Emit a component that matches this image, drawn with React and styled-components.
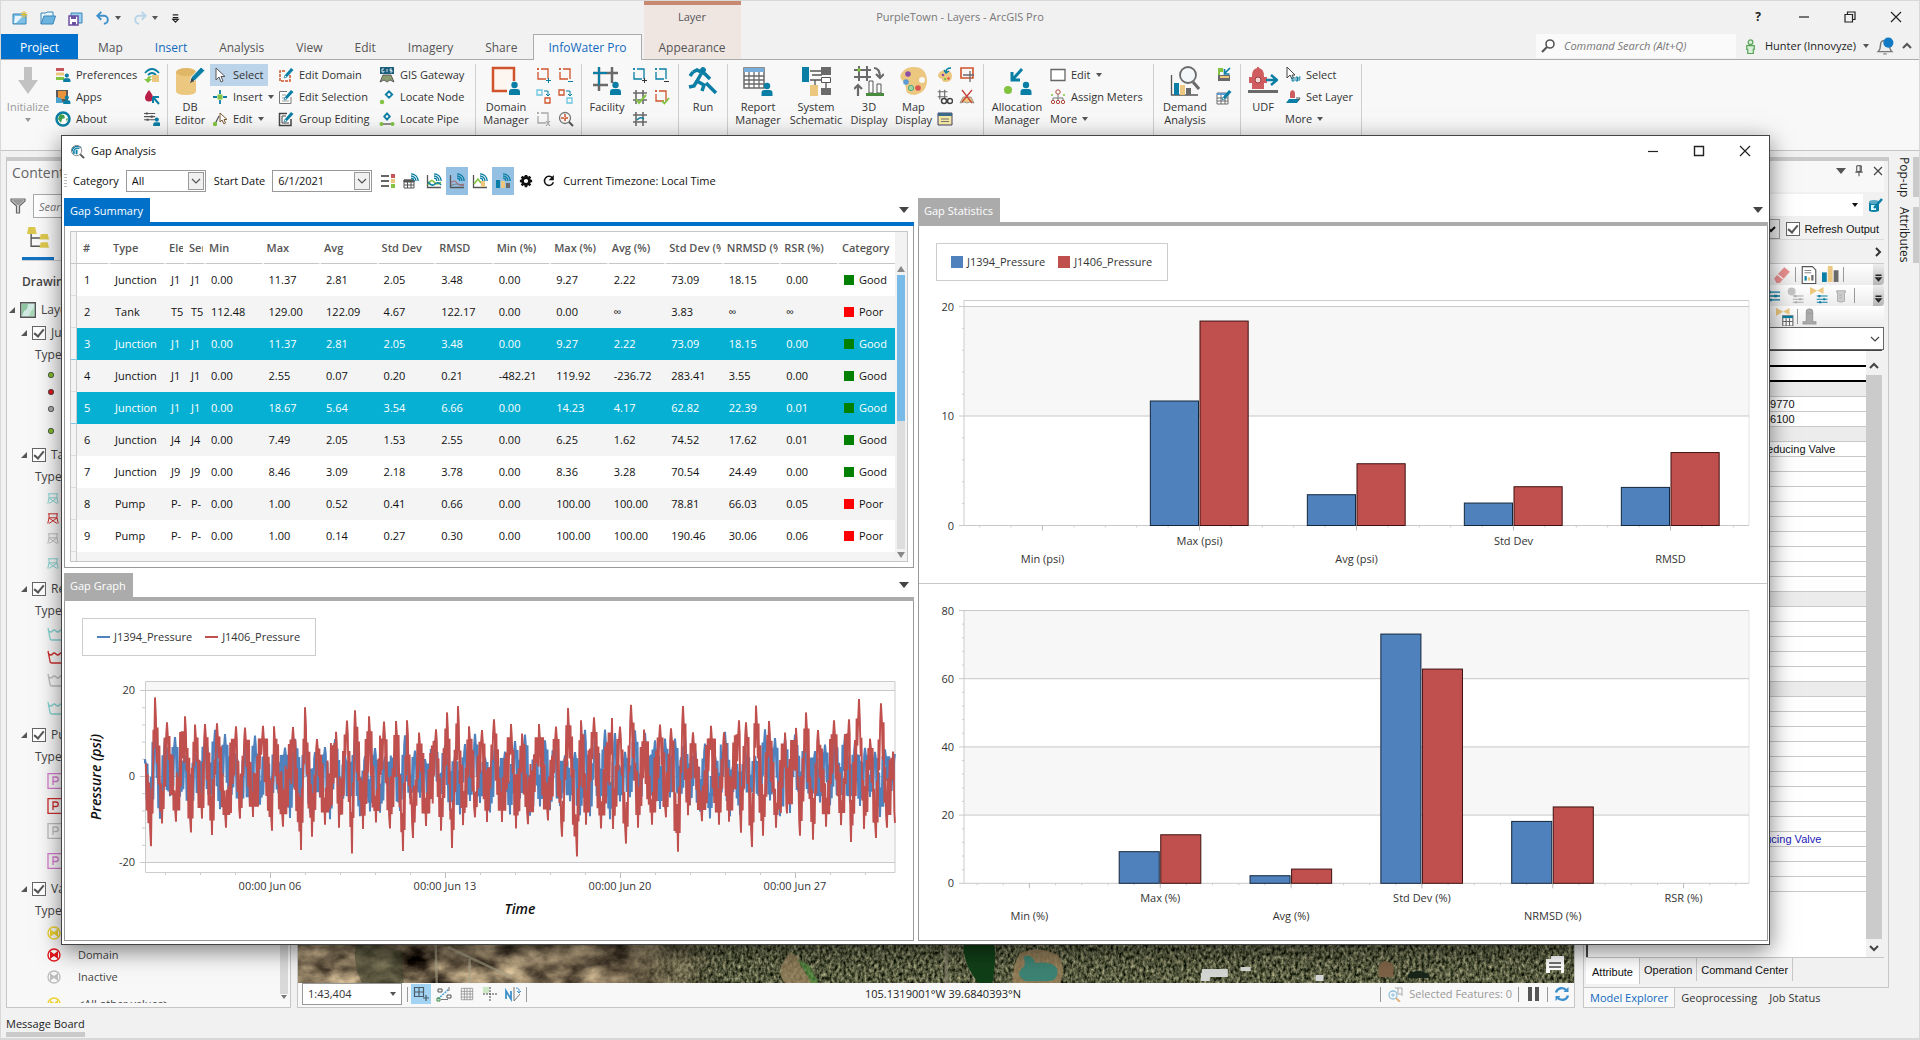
import { useState } from "react";
import styled, { createGlobalStyle, css } from "styled-components";

const BLUE = "#4f81bd";
const RED = "#c0504d";
const TEAL = "#0a7ea4";
const GOLD = "#ecc77f";
const GREY = "#6a6a6a";
const GREEN = "#82c341";
const ORANGE = "#d0532b";

const GlobalStyle = createGlobalStyle`
  * { box-sizing: border-box; }
  body {
    margin: 0;
    background: #f1f1f1;
    color: #222;
    font: 11px/14px "Open Sans", "Noto Sans", sans-serif;
  }
  button, input, select { font: inherit; color: inherit; margin: 0; }
  button { border: 0; padding: 0; background: none; }
  svg { display: block; flex: none; }
`;

/* ---------- icons ---------- */

const person = (x, y) => (
  <g fill={TEAL}>
    <circle cx={x} cy={y - 4} r="3.2" />
    <path d={`M${x - 5.5} ${y + 6}V${y + 3}q0-3 3-3h5q3 0 3 3v3z`} />
  </g>
);
const waves = (
  <g fill="none" stroke={TEAL} strokeWidth="1.3">
    <path d="M8 .8a7.200 7.200 0 0 1 7.200 7.200M8 3a5 5 0 0 1 5 5M8 5.200a2.800 2.800 0 0 1 2.800 2.800" />
  </g>
);
const axes = <path d="M1.500 2v12.500H15" fill="none" stroke="#555" strokeWidth="1.300" />;
const sliders = (c) => (
  <g stroke={c} strokeWidth="1.500" fill={c}>
    <path d="M0 3.500h16M0 8h16M0 12.500h16" />
    <path d="M4 2v3M11 6.500v3M5 11v3" strokeWidth="3" />
  </g>
);
const pencil = (
  <g>
    <path d="M6 11l1-3 6-7 2.500 2-6.500 7z" fill={TEAL} />
    <path d="M6 11l1-3 2 2z" fill="#fff" stroke={TEAL} strokeWidth=".6" />
  </g>
);
const hashLines = (c) => <path d="M4 1v14M11 1v14M1 4h14M1 11h14" fill="none" stroke={c} strokeWidth="1.600" />;
const dashBox = (c) => (
  <g fill="none" stroke={c} strokeWidth="1.300">
    <path d="M5 2h7v10M2 5v7h8" />
    <path d="M1 2h2M2 1v2" />
  </g>
);

const ICONS = {
  project: <g><path d="M1 4h13v10H1z" fill="#7cc0e8" stroke="#3a86b7" /><path d="M3 6h8L4 13H2z" fill="#eaf5fb" /><path d="M12 1v7M8.500 4.500h7M9.500 2l5 5M14.500 2l-5 5" stroke="#e0bb34" /></g>,
  open: <g><path d="M1 14V3h5l1-1h6v4" fill="#e8f4fb" stroke="#3a86b7" /><path d="M1 14L4 6h11.500L13 14z" fill="#6bb4df" stroke="#3a86b7" /></g>,
  save: <g><path d="M3 3h11v10H3z" fill="#9bd0ee" stroke="#3a86b7" /><path d="M1 6h9v9H1z" fill="#fff" stroke="#6b4fa0" strokeWidth="1.500" /><path d="M3 6h5v3H3zM4 12h4v3H4z" fill="#6b4fa0" /></g>,
  undo: <path d="M6 1L1.500 5.500 6 10M2 5.500h7a4.500 4.500 0 0 1 0 9" fill="none" stroke="#3f91cb" strokeWidth="2.200" />,
  redo: <path d="M10 1l4.500 4.500L10 10M14 5.500H7a4.500 4.500 0 0 0 0 9" fill="none" stroke="#b9d5e8" strokeWidth="2.200" />,
  initialize: <path d="M6 0h8v13h6L10 27 0 13h6z" transform="translate(5 1)" fill="#c2c2c2" />,
  prefs: <g><path d="M1 1h8v3H1z" fill="#c6545b" /><path d="M1 5.500h8v3H1z" fill={GOLD} /><path d="M1 10h8v3H1z" fill={GREEN} /><g transform="translate(4 6) scale(.65)">{person(12, 8)}</g></g>,
  apps: <g><path d="M1 1h12v12H1z" fill="#5b5b5b" /><path d="M3 2h8v8H3z" fill="#e9943a" /><path d="M1 8l5 1 2 5H1z" fill="#4aa3cf" /><g transform="translate(4 6) scale(.65)">{person(12, 8)}</g></g>,
  about: <g><circle cx="8" cy="8" r="6.500" fill="#fff" stroke={TEAL} strokeWidth="2.500" /><path d="M5 3l4 1 1 3-3 1-1 4-3-4zM11 8l2-1-1 4z" fill="#3f9d4b" /></g>,
  syncDb: <g><path d="M1 6q7-8 14 0M4 8q4-4 8 0" fill="none" stroke={TEAL} strokeWidth="1.800" /><path d="M8 8h7v7H8z" fill={GOLD} /><path d="M8 9q-5 0-5 3H0l4 4 4-4H5.500" fill={GREEN} /></g>,
  drop: <g><path d="M5 1q4 5 4 7.500a4 4 0 0 1-8 0Q1 6 5 1z" fill="#b71f48" /><path d="M9 8h6M9 8v6M9 8l6 7" stroke={TEAL} strokeWidth="2" /></g>,
  options: <g><g transform="scale(.7)">{sliders("#555")}</g><g transform="translate(5 6) scale(.65)">{person(12, 8)}</g></g>,
  dbEdit: <g><path d="M1 6v19q0 4 10 4t10-4V6z" fill={GOLD} /><ellipse cx="11" cy="6" rx="10" ry="4" fill="#e0b766" /><path d="M15 16l1.500-5L26 1l4 3.500-10 10z" fill={TEAL} stroke="#f8f8f8" /><path d="M15 17l1.500-5 3 3z" fill="#444" /></g>,
  cursor: <path d="M4 1v12l3-3 2 5 2-1-2-4.500h4z" fill="#fff" stroke="#555" />,
  insert: <g><path d="M8 1v4M8 11v4M1 8h4M11 8h4" stroke={TEAL} strokeWidth="1.800" /><path d="M5.500 5.500h5v5h-5z" fill={GREEN} /></g>,
  editLine: <g><path d="M3 13L7 5" stroke="#555" strokeWidth="1.300" /><circle cx="3" cy="13" r="2.200" fill={GREEN} /><path d="M8 2v9l2-2 2 4 1.500-1-1.500-3.500h3z" fill="#fff" stroke="#7a5a35" /></g>,
  editDomain: <g><path d="M12 8v6H2V4h6" fill="none" stroke={ORANGE} strokeWidth="1.500" strokeDasharray="3 1" />{pencil}</g>,
  editSel: <g><path d="M13 8v6.500H1.500v-12H9" fill="#fff" stroke="#777" /><path d="M4 6h4M4 9h3M4 12h7" stroke="#999" />{pencil}</g>,
  groupEdit: <g><path d="M13 8v6.500H1.500v-12H9" fill="#fff" stroke="#444" strokeWidth="1.500" /><path d="M4 5h4M4 5v7h7" stroke="#444" fill="none" />{pencil}</g>,
  gis: <g><path d="M1 0h14v7H1z" fill="#1b5f7d" /><path d="M5 2H3v3h2V4M8 2v3M13 2h-2v1.500h2V5h-2" stroke="#fff" fill="none" strokeWidth=".8" /><path d="M1 15l3-7h8l3 7-4-2-3 2-3-2z" fill="#8b9c72" stroke="#444" strokeWidth=".8" /></g>,
  locNode: <g><circle cx="3" cy="13" r="2.200" fill={GREEN} /><path d="M10 1l4.500 4.500L10 10 5.500 5.500z" fill={TEAL} /><circle cx="10" cy="5.500" r="1.500" fill="#fff" /></g>,
  locPipe: <g><path d="M3 13h10" stroke="#555" strokeWidth="1.300" /><circle cx="2.500" cy="13" r="2" fill={GREEN} /><circle cx="13.500" cy="13" r="2" fill={GREEN} /><path d="M8 1l4 4.500L8 10 4 5.500z" fill={TEAL} /><circle cx="8" cy="5.500" r="1.300" fill="#fff" /></g>,
  domain: <g><path d="M2 2h21v23H2z" fill="#fdf5f0" stroke={ORANGE} strokeWidth="2.500" /><path d="M16 15h14v15H16z" fill="#f8f8f8" />{person(23.500, 23)}</g>,
  domAdd: <g>{dashBox(ORANGE)}<path d="M10 13.500h5M12.500 11v5" stroke={TEAL} /></g>,
  domDel: <g>{dashBox(ORANGE)}<path d="M10 14.500h5" stroke={TEAL} /></g>,
  domSwap: <g fill="none"><path d="M1 1h5v5H1z" stroke="#6ac6dd" strokeWidth="1.300" /><path d="M9 9h5v5H9z" stroke={ORANGE} strokeWidth="1.300" /><path d="M8 2h4v4M10 5l2 2 2-2" stroke={TEAL} /></g>,
  domSwap2: <g fill="none"><path d="M1 1h5v5H1z" stroke={ORANGE} strokeWidth="1.300" /><path d="M9 9h5v5H9z" stroke="#6ac6dd" strokeWidth="1.300" /><path d="M8 2h4v4M10 5l2 2 2-2" stroke={TEAL} /></g>,
  domClear: <g>{dashBox("#aaa")}<path d="M10 10l4 5M14 10l-4 5" stroke="#999" /></g>,
  domZoom: <g fill="none"><circle cx="7" cy="7" r="5.500" stroke="#777" strokeWidth="1.300" /><path d="M11 11l4 4" stroke="#555" strokeWidth="2" /><path d="M7 3v8M3 7h8" stroke={ORANGE} strokeWidth="1.500" strokeDasharray="3 1" /></g>,
  facility: <g><path d="M7 1v24M20 1v16M1 7h25M1 19h15" stroke={GREY} strokeWidth="2.500" fill="none" /><path d="M7 1v18M1 7h14" stroke={TEAL} strokeWidth="2" />{person(23.500, 23)}</g>,
  facAdd: <g>{dashBox(TEAL)}<path d="M10 13.500h5M12.500 11v5" stroke="#333" /></g>,
  facDel: <g>{dashBox(TEAL)}<path d="M10 14.500h5" stroke="#333" /></g>,
  facCheck: <g>{hashLines(GREY)}<path d="M4 10l3 4 7-8" fill="none" stroke={GREEN} strokeWidth="2" /></g>,
  facBox: <g>{dashBox(ORANGE)}<path d="M8 12l2.500 2.500L15 9" fill="none" stroke={GREEN} strokeWidth="1.800" /></g>,
  facHash: <g>{hashLines(GREY)}<path d="M5 9q3-4 7-1" stroke={TEAL} fill="none" strokeWidth="1.500" /></g>,
  run: <g fill="none" stroke={TEAL} strokeWidth="3.500"><circle cx="15" cy="4" r="2.500" fill={TEAL} strokeWidth="1" /><path d="M5 6l4-2 8 4 5 5M13 8l-4 7 7 4-2 6M9 15l-3 5-5 1M18 17l10 10M2 10l3-4" /></g>,
  report: <g><path d="M1 2h20v20H1z" fill="#fff" stroke={GREY} strokeWidth="1.500" /><path d="M1 2h20v4H1z" fill="#78aedb" /><path d="M1 10h20M1 14h20M1 18h20M6 6v16M11 6v16M16 6v16" stroke={GREY} strokeWidth="1.300" />{person(24, 24)}</g>,
  schematic: <g><path d="M9 5h12M9 14h12M11 9h10M14 14v6M25 12v12" stroke="#555" strokeWidth="1.300" /><path d="M1 1h7v15H1z" fill={TEAL} /><path d="M20 1h10v8H20z" fill={GREY} /><path d="M20.500 11.500h9v5h-9z" fill="#fff" stroke="#555" /><path d="M9 19h8v11H9z" fill={GOLD} /><path d="M20 22h10v7H20z" fill={GREY} /></g>,
  display3d: <g><path d="M5 0v15M13 0v15M0 4h17M0 11h17" stroke={GREY} strokeWidth="2" /><circle cx="5" cy="4" r="1.800" fill={GREEN} /><path d="M20 2q6 0 6 10M22 8l4 4 4-4M4 30V19M0 23l4-4 4 4" fill="none" stroke={GREY} strokeWidth="2.200" /><path d="M15 15h4v12h-4zM23 18h4v9h-4z" fill="#fff" stroke="#555" /><path d="M12 27h18v3H12z" fill="#4a8c3f" /></g>,
  palette: <g><path d="M13 1q14-1 15 13 0 12-12 15-10 0-9-7 0-4-3-7-4-3-2-7 3-6 11-7z" fill={GOLD} /><circle cx="9" cy="8" r="2.800" fill="#8a4fa8" /><circle cx="7" cy="16" r="2.800" fill="#5b9bd5" /><circle cx="12" cy="22" r="2.600" fill="#a8d5a0" stroke="#4a8" /><circle cx="19" cy="22" r="2.800" fill="#d9534f" /><circle cx="23" cy="14" r="3" fill="#f8f8f8" /></g>,
  paletteS: <g><path d="M8 3q7 0 7 6t-7 6q-3 0-3-3-4-1-4-4 1-4 7-5z" fill={GOLD} /><circle cx="6" cy="8" r="1.300" fill="#8a4fa8" /><circle cx="8" cy="12" r="1.200" fill={GREEN} /><circle cx="11.500" cy="11.500" r="1.300" fill="#d9534f" /><path d="M14 1Q9 1 9 5M7 3l2 3 3-2" fill="none" stroke={TEAL} strokeWidth="1.400" /></g>,
  frameS: <g fill="none"><path d="M2 1h12v10H2z" stroke={ORANGE} strokeWidth="1.600" /><path d="M11 4v11M4 8h11" stroke={GREY} strokeWidth="1.300" /></g>,
  hashFind: <g><g transform="scale(.7)">{hashLines(GREY)}</g><circle cx="7" cy="12" r="2.500" fill="#fff" stroke="#444" strokeWidth="1.500" /><circle cx="13" cy="12" r="2.500" fill="#fff" stroke="#444" strokeWidth="1.500" /></g>,
  noMap: <g><path d="M1 14l3-6h8l3 6-4-1-3 1-3-1z" fill={GOLD} stroke="#777" strokeWidth=".7" /><path d="M3 1l10 13M13 1L3 13" stroke="#c8403a" strokeWidth="1.300" /></g>,
  notes: <g><path d="M1 2h14v12H1z" fill="#f7e9a4" stroke="#446" /><path d="M1 2h14v3H1z" fill="#3c6c8c" /><path d="M4 8h8M4 10.500h8" stroke="#777" /></g>,
  alloc: <g><circle cx="6" cy="24" r="4" fill={GREEN} /><path d="M20 3L11 13M10 6v8h8" fill="none" stroke={TEAL} strokeWidth="3" />{person(24, 23)}</g>,
  rect: <path d="M1 2.500h14v11H1z" fill="#fff" stroke="#666" strokeWidth="1.300" />,
  meters: <g fill="none" stroke="#b0483a"><circle cx="8" cy="3" r="2.200" /><path d="M8 5v4M3 12V9h10v3M8 9v3" stroke="#777" /><circle cx="3" cy="13" r="1.700" /><circle cx="8" cy="13" r="1.700" /><circle cx="13" cy="13" r="1.700" /><circle cx="2" cy="6" r="1" fill={GREEN} stroke="none" /><circle cx="14" cy="6" r="1" fill={GREEN} stroke="none" /></g>,
  demand: <g><path d="M1.500 9v20H28" stroke="#555" fill="none" strokeWidth="1.300" /><path d="M4 17h5v12H4z" fill={TEAL} /><path d="M10 19h5v10h-5z" fill={GOLD} /><path d="M16 22h5v7h-5z" fill={GREY} /><path d="M23 16l6 7" stroke={GREY} strokeWidth="3" /><circle cx="18" cy="9" r="8" fill="#f3f7fa" stroke={GREY} strokeWidth="1.800" /></g>,
  demIn: <g><path d="M2 1h5v4H4v4H2z" fill={GREEN} /><path d="M2 8h12v6H2z" fill={GREY} /><path d="M4 10h9" stroke={GOLD} strokeWidth="2" /><path d="M14 1L9 6M8.500 2v5h5" stroke={TEAL} strokeWidth="1.700" fill="none" /></g>,
  demEdit: <g><path d="M1 4h11v11H1z" fill="#fff" stroke={GREY} /><path d="M1 4h11v2H1z" fill="#5b9bd5" /><path d="M1 9h11M1 12h11M5 6v9M9 6v9" stroke={GREY} />{pencil}</g>,
  udf: <g><path d="M4 23V10q0-7 5-8V1h2v1q5 1 5 8v13zM1 11h18v6H1z" fill="#cf5c5e" /><circle cx="10" cy="14" r="3" fill="#f4d6d6" stroke="#9c3c3e" /><path d="M0 24h30v3H0z" fill={GREY} /><path d="M18 14h9M23 9l6 5-6 5" stroke={TEAL} strokeWidth="2.500" fill="none" /></g>,
  udfSel: <g><path d="M2 0v11l3-3 2 4 1.500-1L7 8h3z" fill="#fff" stroke="#444" /><path d="M7 10v4h2v-4M11 10v4h1.500v-4zM15.500 10H14v4M14 12h1.500" stroke={TEAL} fill="none" /></g>,
  udfLayer: <g><path d="M5 9V4q0-2 2.500-3Q10 2 10 4v5z" fill="#cf5c5e" /><path d="M1 14l3-4h11l-3 4z" fill={TEAL} /><path d="M11 9h4l-2 3" fill="none" stroke="#555" /></g>,
  searchS: <g fill="none" stroke="#555" strokeWidth="1.600"><circle cx="10" cy="6" r="4" /><path d="M7 9l-5 5" strokeWidth="2.200" /></g>,
  user: <g fill="#d9efd9" stroke="#5aa55a" strokeWidth="1.300"><circle cx="8" cy="3.500" r="2.500" /><path d="M4 7h8v4h-1v4.500H5V11H4z" /></g>,
  bell: <g><path d="M2 13q2-2 2-6 0-4 4-4t4 4q0 4 2 6z" fill="#eee" stroke="#777" strokeWidth="1.300" /><path d="M6.500 15h3" stroke="#777" /><circle cx="11" cy="5" r="4.500" fill="#1279c4" /></g>,
  filter: <g><path d="M1 1h14v2L9.500 8v7h-3V8L1 3z" fill="#ddd" stroke="#666" strokeWidth="1.200" /><path d="M2 2h12L9 7H7z" fill="#999" /></g>,
  gap: <g><path d="M2 8a6 6 0 0 1 10-4M4 9a4 4 0 0 1 6-4" fill="none" stroke={TEAL} strokeWidth="1.400" /><circle cx="7" cy="7" r="5.500" fill="none" stroke="#888" /><path d="M3 10V8h2v3zM6 11V6h2v5z" fill={TEAL} /><path d="M11 11l4 4" stroke="#555" strokeWidth="2" /></g>,
  tList: <g><path d="M1 3h8M1 8h8M1 13h8" stroke="#666" strokeWidth="1.800" /><path d="M11 1h4v4h-4z" fill="#c6545b" /><path d="M11 6h4v4h-4z" fill={GOLD} /><path d="M11 11h4v4h-4z" fill={GREEN} /></g>,
  tTable: <g><path d="M1 7h10v8H1z" fill="#fff" stroke="#555" /><path d="M1 7h10v2H1zM1 12h10M4.500 9v6M8 9v6" fill="#555" stroke="#555" />{waves}</g>,
  tGraph: <g>{axes}<path d="M2 12q3-7 6-3t7 0" fill="none" stroke={GREEN} strokeWidth="1.600" /><path d="M2 9q4 5 7 2t6 1" fill="none" stroke={TEAL} strokeWidth="1.500" />{waves}</g>,
  tGraph2: <g>{axes}<path d="M2 10q3-4 6 0t7 1" fill="none" stroke="#b06a80" strokeWidth="1.200" /><path d="M2 12.500q5-3 13 0" fill="none" stroke="#777" strokeWidth="1.200" />{waves}</g>,
  tGraph3: <g>{axes}<path d="M2 11l4-5 3 4" fill="none" stroke={GREEN} strokeWidth="1.600" /><path d="M9 8h4v6H9z" fill={GOLD} />{waves}</g>,
  tBars: <g><path d="M1 7h4v8H1z" fill={TEAL} /><path d="M6 8h4v7H6z" fill={GOLD} /><path d="M11 10h4v5h-4z" fill={GREY} />{waves}</g>,
  gear: <g><circle cx="8" cy="8" r="4" fill="none" stroke="#111" strokeWidth="3.200" /><path d="M8 1v2.500M8 12.500V15M1 8h2.500M12.500 8H15M3 3l2 2M11 11l2 2M13 3l-2 2M5 11l-2 2" stroke="#111" strokeWidth="3" /></g>,
  reload: <g><path d="M13 9.500A5.200 5.200 0 1 1 12 4.500" fill="none" stroke="#111" strokeWidth="1.700" /><path d="M13.500 1v6h-6z" fill="#111" /></g>,
  snap: <g fill="none" stroke="#4a5c68" strokeWidth="1.200"><path d="M1.500 1.500h9v9h-9zM6 1.500v9M1.500 6h9M13 9v6M10 12h6" /></g>,
  snap2: <g fill="none"><path d="M2 3h4v3H2zM11 9h4v3h-4z" stroke="#555" /><path d="M2 13L13 3" stroke="#4a9fd5" strokeWidth="1.500" strokeDasharray="2 1" /><path d="M1 12h3v3H1z" stroke="#3a8a3a" /><path d="M5 13.500h7M13 1v4" stroke="#777" /></g>,
  grid: <path d="M1.500 1.500h13v13h-13zM5 1v14M8 1v14M11.500 1v14M1 5h14M1 8h14M1 11.500h14" fill="none" stroke="#999" />,
  cross: <g><path d="M1 1h6v6H1z" fill="#cde8c4" /><path d="M8 1v14M1 8h14" stroke="#444" strokeDasharray="2 1" /></g>,
  north: <g fill="none"><path d="M1 13V5l5 8V5" stroke="#3f91cb" strokeWidth="1.800" /><path d="M9 1v14l6-7" stroke="#777" /><path d="M11 2q4 0 3 4M12 5l2 2 2-2" stroke="#3f91cb" /></g>,
  selZoom: <g fill="none"><path d="M8 2h7v8M11 2v6h4" stroke="#aaa" /><circle cx="6" cy="9" r="4" stroke="#8fc0dd" strokeWidth="1.300" /><path d="M6 7v4M4 9h4" stroke="#8fc0dd" /><path d="M9 12l4 4" stroke="#e0b07a" strokeWidth="1.800" /></g>,
  pause: <path d="M3 1h4v14H3zM10 1h4v14h-4z" fill="#555" />,
  refresh: <g fill="none" stroke="#3f91cb" strokeWidth="2.400"><path d="M2 6.500a6 6 0 0 1 10.500-2M14 9.500a6 6 0 0 1-10.500 2" /><path d="M14.500 1v5h-5zM1.500 15v-5h5z" fill="#3f91cb" stroke="none" /></g>,
  pin: <path d="M5 1h6v8H5zM9.500 1v8M3 9.500h10M8 10v5" fill="none" stroke="#444" strokeWidth="1.300" />,
  dbSmall: <g><path d="M1 5v9q5 2 10 0V5z" fill={TEAL} /><ellipse cx="6" cy="5" rx="5" ry="2" fill="#5aa9c4" /><path d="M3 8h5v5H3z" fill="#dff" /><path d="M6 11l8-9" stroke={TEAL} strokeWidth="2.500" /></g>,
  eraser: <g><path d="M1 11l9-10 5 4-9 10H3z" fill="#e88f8f" /><path d="M4 7.500l5 4" stroke="#fff" /></g>,
  reportS: <g><path d="M2 .5h9l3 3v12H2z" fill="#fff" stroke="#555" /><path d="M4 4h6M4 6h6" stroke="#888" /><path d="M4 9h2v4H4z" fill={TEAL} /><path d="M7 10h2v3H7z" fill={GOLD} /><path d="M10 8h2v5h-2z" fill={GREY} /></g>,
  bars: <g><path d="M0 6h4.500v9H0z" fill={TEAL} /><path d="M5.500 0H10v15H5.500z" fill={GOLD} /><path d="M11 4h4.500v11H11z" fill={GREY} /></g>,
  slidersS: sliders(TEAL),
  slidersOff: <g><circle cx="5" cy="4" r="3.500" fill="#c4c4c4" /><g transform="translate(6 6) scale(.6)">{sliders("#aaa")}</g></g>,
  valveSet: <g><path d="M0 0l12 6V0L0 7z" fill={GOLD} /><g transform="translate(6 6) scale(.6)">{sliders(TEAL)}</g></g>,
  cup: <path d="M3 2h10v2h-1v10q-4 2-8 0V4H3zM6 7h3M6 10h3" fill="#ccc" stroke="#aaa" />,
  valveTable: <g><path d="M0 0l12 6V0L0 7z" fill={GOLD} /><path d="M6 7h9v9H6z" fill="#fff" stroke={GREY} /><path d="M6 7h9v2H6z" fill={TEAL} /><path d="M9 9v7M12 9v7M6 12h9" stroke={GREY} /></g>,
  hydrantOff: <path d="M5 13V4q0-3 3-3t3 3v9h3v2H2v-2zM5 5h6" fill="#aaa" stroke="#999" />,
  chat: <g><path d="M0 3h5V0h13v17h-3v-3H4v3H0z" fill="#fff" /><path d="M3 7h12M3 11h12" stroke="#444" strokeWidth="1.500" /></g>,
  layers: <g><path d="M.7.7h14.600v14.600H.7z" fill="#cfe9e2" stroke="#555" strokeWidth="1.400" /><path d="M2 2h6l-1 5-3 2-2 5z" fill="#8fc4a0" /><path d="M11 9l3-3v8h-5z" fill="#a7d8b4" /></g>,
  tree: <g><path d="M3 4v10h8M3 8h8" fill="none" stroke="#555" /><path d="M1 0h5l1 5H0z" fill="#dcc84e" /><path d="M10 5h5l1 4H9zM10 11h5l1 4H9z" fill="#dcc84e" /></g>,
};

const Icon = ({ name, size = 16, box }) => (
  <svg width={size} height={size} viewBox={`0 0 ${box || 16} ${box || 16}`} aria-hidden="true">
    {ICONS[name]}
  </svg>
);

const Caret = styled.i`
  display: block;
  width: 0;
  height: 0;
  border: 3px solid transparent;
  border-top: 4px solid ${(p) => p.$color || "#555"};
  border-bottom: 0;
  ${(p) => p.$big && css`border-width: 6px 5px 0;`}
`;

/* ---------- title bar ---------- */

const Page = styled.div`
  position: relative;
  min-height: 100vh;
  display: flex;
  flex-direction: column;
  border: 1px solid #d8d8d8;
  border-bottom-width: 2px;
  overflow: hidden;
`;
const Header = styled.header`
  display: grid;
  grid-template-columns: 1fr auto 1fr;
  grid-template-rows: 32px 26px;
  border-bottom: 1px solid #ababab;
  height: 59px;
`;
const QuickAccess = styled.div`
  grid-area: 1 / 1;
  display: flex;
  align-items: center;
  gap: 12px;
  padding: 2px 0 0 11px;
`;
const QuickGroup = styled.div`
  display: flex;
  align-items: center;
  gap: 5px;
`;
const AppTitle = styled.h1`
  grid-area: 1 / 2;
  margin: 0;
  align-self: center;
  font-size: 11px;
  font-weight: 400;
  color: #777;
`;
const WindowButtons = styled.div`
  grid-area: 1 / 3;
  display: flex;
  justify-content: flex-end;
  align-items: center;
  button { width: 46px; height: 28px; display: grid; place-items: center; font-size: 12px; }
`;
const Tabs = styled.nav`
  grid-area: 1 / 1 / 3 / 3;
  display: flex;
  align-items: flex-end;
  pointer-events: none;
  button { pointer-events: auto; }
`;
const Tab = styled.button`
  height: 25px;
  padding: 2px 16px 0;
  font-size: 12px;
  color: ${(p) => (p.$accent ? "#1269bd" : "#555")};
  ${(p) => p.$file && css`
    width: 77px;
    margin-right: 4px;
    color: #fff;
    background: #0072ce;
  `}
  ${(p) => p.$active && css`
    height: 26px;
    padding: 1px 14px 0;
    margin: 0 2px -1px 0;
    background: #f8f8f8;
    border: 1px solid #ababab;
    border-bottom: 0;
  `}
`;
const ContextTab = styled.div`
  align-self: stretch;
  width: 97px;
  display: flex;
  flex-direction: column;
  justify-content: space-between;
  align-items: center;
  background: #efe6e2;
  border-top: 4px solid #c88971;
  color: #555;
  padding-top: 5px;
  button { height: 25px; padding-top: 2px; font-size: 12px; }
`;
const UserArea = styled.div`
  grid-area: 2 / 3;
  display: flex;
  justify-content: flex-end;
  align-items: center;
  gap: 7px;
  padding-right: 6px;
`;
const CommandSearch = styled.label`
  display: flex;
  align-items: center;
  gap: 8px;
  width: 200px;
  height: 24px;
  padding-left: 4px;
  background: #fafafa;
  input { flex: 1; min-width: 0; border: 0; padding: 0; background: none; font-style: italic; }
  input::placeholder { color: #777; }
`;

const Glyph = ({ d, size = 12, w = 1.2, color = "#222" }) => (
  <svg width={size} height={size} viewBox="0 0 12 12" fill="none" stroke={color} strokeWidth={w}>
    <path d={d} />
  </svg>
);

const MENU = ["Map", "Insert", "Analysis", "View", "Edit", "Imagery", "Share"];

function TitleBar() {
  return (
    <Header>
      <QuickAccess>
        <button aria-label="New project"><Icon name="project" /></button>
        <button aria-label="Open"><Icon name="open" /></button>
        <button aria-label="Save"><Icon name="save" /></button>
        <QuickGroup>
          <button aria-label="Undo"><Icon name="undo" size={14} /></button><Caret />
        </QuickGroup>
        <QuickGroup>
          <button aria-label="Redo"><Icon name="redo" size={14} /></button><Caret />
        </QuickGroup>
        <button aria-label="Customize"><Glyph size={11} d="M3 2h6M3 5h6M3 7h6L6 10z" /></button>
      </QuickAccess>
      <AppTitle>PurpleTown - Layers - ArcGIS Pro</AppTitle>
      <WindowButtons>
        <button aria-label="Help"><b>?</b></button>
        <button aria-label="Minimize"><Glyph d="M1 6h10" /></button>
        <button aria-label="Restore"><Glyph d="M1 3.500h7.500V11H1zM3.500 3V1H11v7.500H9" /></button>
        <button aria-label="Close"><Glyph d="M1 1l10 10M11 1L1 11" /></button>
      </WindowButtons>
      <Tabs>
        <Tab $file>Project</Tab>
        {MENU.map((m) => <Tab key={m} $accent={m === "Insert"}>{m}</Tab>)}
        <Tab $active $accent>InfoWater Pro</Tab>
        <ContextTab>
          <span>Layer</span>
          <button>Appearance</button>
        </ContextTab>
      </Tabs>
      <UserArea>
        <CommandSearch>
          <Icon name="searchS" />
          <input placeholder="Command Search (Alt+Q)" aria-label="Command Search" />
        </CommandSearch>
        <Icon name="user" size={15} />
        <span>Hunter (Innovyze)</span>
        <Caret />
        <button aria-label="Notifications"><Icon name="bell" size={18} /></button>
        <button aria-label="Collapse ribbon"><Glyph d="M2 8l4-4 4 4" w={2} color="#555" /></button>
      </UserArea>
    </Header>
  );
}

/* ---------- ribbon ---------- */

const RibbonBar = styled.div`
  display: flex;
  height: 91px;
  padding-top: 4px;
  background: #f8f8f8;
  border-bottom: 1px solid #c4c4c4;
`;
const Group = styled.div`
  display: flex;
  width: ${(p) => p.$w}px;
  padding-left: 2px;
  border-right: 1px solid #cfcfcf;
`;
const Big = styled.button`
  width: ${(p) => p.$w}px;
  display: flex;
  flex-direction: column;
  align-items: center;
  gap: 4px;
  padding-top: 2px;
  line-height: 13px;
  color: ${(p) => (p.$off ? "#999" : "#333")};
  ${Caret} { margin-top: 1px; }
`;
const Col = styled.div`
  width: ${(p) => p.$w || 22}px;
`;
const Item = styled.button`
  display: flex;
  align-items: center;
  gap: 5px;
  height: 22px;
  padding: 0 ${(p) => (p.$on ? 5 : 2)}px 0 2px;
  color: #333;
  white-space: nowrap;
  background: ${(p) => (p.$on ? "#bcd4e9" : "none")};
`;

const RIBBON = [
  { w: 167, parts: [
    { big: ["Initialize"], icon: "initialize", w: 50, off: true },
    { w: 89, items: [["prefs", "Preferences"], ["apps", "Apps"], ["about", "About"]] },
    { items: [["syncDb"], ["drop"], ["options"]] },
  ] },
  { w: 308, parts: [
    { big: ["DB", "Editor"], icon: "dbEdit", w: 40 },
    { w: 66, items: [["cursor", "Select", "on"], ["insert", "Insert", "menu"], ["editLine", "Edit", "menu"]] },
    { w: 101, items: [["editDomain", "Edit Domain"], ["editSel", "Edit Selection"], ["groupEdit", "Group Editing"]] },
    { w: 98, items: [["gis", "GIS Gateway"], ["locNode", "Locate Node"], ["locPipe", "Locate Pipe"]] },
  ] },
  { w: 106, parts: [
    { big: ["Domain", "Manager"], icon: "domain", w: 56 },
    { items: [["domAdd"], ["domSwap"], ["domClear"]] },
    { items: [["domDel"], ["domSwap2"], ["domZoom"]] },
  ] },
  { w: 97, parts: [
    { big: ["Facility"], icon: "facility", w: 46 },
    { items: [["facAdd"], ["facCheck"], ["facHash"]] },
    { items: [["facDel"], ["facBox"]] },
  ] },
  { w: 49, parts: [{ big: ["Run"], icon: "run", w: 44 }] },
  { w: 256, parts: [
    { big: ["Report", "Manager"], icon: "report", w: 56 },
    { big: ["System", "Schematic"], icon: "schematic", w: 60 },
    { big: ["3D", "Display"], icon: "display3d", w: 46 },
    { big: ["Map", "Display"], icon: "palette", w: 43 },
    { items: [["paletteS"], ["hashFind"], ["notes"]] },
    { items: [["frameS"], ["noMap"]] },
  ] },
  { w: 170, parts: [
    { big: ["Allocation", "Manager"], icon: "alloc", w: 62 },
    { w: 100, items: [["rect", "Edit", "menu"], ["meters", "Assign Meters"], [null, "More", "menu"]] },
  ] },
  { w: 87, parts: [
    { big: ["Demand", "Analysis"], icon: "demand", w: 58 },
    { items: [["demIn"], ["demEdit"]] },
  ] },
  { w: 121, parts: [
    { big: ["UDF"], icon: "udf", w: 40 },
    { w: 70, items: [["udfSel", "Select"], ["udfLayer", "Set Layer"], [null, "More", "menu"]] },
  ] },
];

function Ribbon() {
  return (
    <RibbonBar>
      {RIBBON.map((g, i) => (
        <Group key={i} $w={g.w}>
          {g.parts.map((p, j) =>
            p.big ? (
              <Big key={j} $w={p.w} $off={p.off}>
                <Icon name={p.icon} size={30} box={30} />
                <span>{p.big[0]}{p.big[1] && <><br />{p.big[1]}</>}</span>
                {p.off && <Caret $color="#999" />}
              </Big>
            ) : (
              <Col key={j} $w={p.w}>
                {p.items.map(([icon, label, mode]) => (
                  <Item key={icon || label} $on={mode === "on"} aria-label={label || icon}>
                    {icon && <Icon name={icon} />}
                    {label}
                    {mode === "menu" && <Caret />}
                  </Item>
                ))}
              </Col>
            )
          )}
        </Group>
      ))}
    </RibbonBar>
  );
}

/* ---------- contents pane ---------- */

const Workspace = styled.main`
  flex: 1;
  display: flex;
  padding: 6px 0 0 5px;
  min-height: 0;
`;
const Contents = styled.aside`
  width: 285px;
  display: flex;
  flex-direction: column;
  background: #f8f8f8;
  border: 1px solid #c6c6c6;
  border-top: 4px solid #cacaca;
  padding-bottom: 4px;
  h2 { margin: 3px 0 0 5px; font: 400 14px/18px "Open Sans", sans-serif; color: #666; }
`;
const FilterRow = styled.label`
  display: flex;
  align-items: center;
  gap: 7px;
  margin: 12px 10px 0 3px;
  input { flex: 1; height: 24px; border: 1px solid #aaa; padding: 0 5px; background: #fff; font-style: italic; }
`;
const ViewTabs = styled.div`
  display: flex;
  gap: 5px;
  margin: 9px 10px 0 15px;
  border-bottom: 1px solid #ccc;
  height: 34px;
  button { width: 32px; display: grid; place-items: start center; }
  button:first-child { border-bottom: 3px solid #1272c4; }
`;
const OrderTitle = styled.h3`
  margin: 13px 0 7px 15px;
  font-size: 12px;
  line-height: 16px;
  font-weight: 600;
  color: #444;
`;
const TreeScroll = styled.div`
  flex: 1;
  min-height: 0;
  display: flex;
  overflow: hidden;
  margin-right: 2px;
`;
const TreeList = styled.div`
  flex: 1;
  height: 0;
`;
const TreeRow = styled.div`
  display: flex;
  align-items: center;
  gap: 5px;
  height: ${(p) => p.$h || 22}px;
  padding-left: ${(p) => p.$in}px;
  color: #444;
  font-size: 12px;
`;
const Symbol = styled(TreeRow)`
  gap: 17px;
  font-size: 11px;
`;
const Expander = styled.i`
  width: 0;
  height: 0;
  border: 3px solid transparent;
  border-right-color: #555;
  border-bottom-color: #555;
`;
const Check = styled.input`
  appearance: none;
  width: 14px;
  height: 14px;
  border: 1px solid #666;
  background: #fff;
  display: grid;
  place-items: center;
  &:checked::after {
    content: "";
    width: 4px;
    height: 8px;
    margin-bottom: 2px;
    border: solid #555;
    border-width: 0 2px 2px 0;
    transform: rotate(40deg);
  }
`;
const PaneScroll = styled.div`
  width: 8px;
  background: #d9d9d9;
  display: flex;
  align-items: flex-end;
  span { height: 9px; background: #f8f8f8; padding: 1px 0 0 1px; width: 8px; }
`;

const SYMBOLS = {
  dot: (c) => <svg width="14" height="8" viewBox="0 0 14 8"><circle cx="4" cy="4" r="2.700" fill={c} stroke="#444" strokeWidth=".8" /></svg>,
  tank: (c) => <svg width="12" height="11" viewBox="0 0 12 11" fill="none" stroke={c} strokeWidth="1"><path d="M1 .8h10M2 .8v4h8v-4M2 4.800L.8 10.500M10 4.800l1.200 5.700M2 5l8 5.500M10 5l-8 5.500" /></svg>,
  tub: (c) => <svg width="17" height="14" viewBox="0 0 17 14" fill="none" stroke={c} strokeWidth="1.300"><path d="M1 1l2 10q0 2 2 2h12M2 4q2 2 3.500 0t3.500 0 3.500 0 3.500 0" /></svg>,
  pump: (c) => <svg width="16" height="16" viewBox="0 0 16 16" fill="none" stroke={c} strokeWidth="1.300"><path d="M1 .7h14v14.600H1z" /><path d="M6 12V4h3a2 2 0 0 1 0 4.500H6" /></svg>,
  valve: (c) => <svg width="14" height="14" viewBox="0 0 14 14"><circle cx="7" cy="7" r="6" fill="none" stroke={c} strokeWidth="1.400" /><path d="M3 3l4 3 4-3v8L7 8l-4 3z" fill={c} /></svg>,
};
const LAYERS = [
  ["Junction", "dot", 17, ["#7fba27", "#d8171c", "#a9a9a9", "#7fba27"]],
  ["Tank", "tank", 20, ["#86d3d3", "#cf2c2c", "#bdbdbd", "#86d3d3"]],
  ["Reservoir", "tub", 23, ["#86d3d3", "#cf2c2c", "#bdbdbd", "#86d3d3"]],
  ["Pump", "pump", 25, ["#d77bd0", "#cf2c2c", "#bdbdbd", "#d77bd0"]],
  ["Valve", "valve", 22, ["#efd22e", "#e3161b", "#bdbdbd", "#efd22e"]],
];
const CLASSES = ["Active", "Domain", "Inactive", "<All other values>"];

function ContentsPane() {
  return (
    <Contents>
      <h2>Contents</h2>
      <FilterRow>
        <Icon name="filter" />
        <input placeholder="Search" aria-label="Search contents" />
      </FilterRow>
      <ViewTabs>
        <button aria-label="List by drawing order"><Icon name="tree" size={22} /></button>
        <button aria-label="List by source"><Icon name="layers" size={20} /></button>
      </ViewTabs>
      <OrderTitle>Drawing Order</OrderTitle>
      <TreeScroll>
        <TreeList>
          <TreeRow $h={25} $in={2}><Expander /><Icon name="layers" />Layers</TreeRow>
          {LAYERS.map(([name, shape, h, colors]) => (
            <div key={name}>
              <TreeRow as="label" $in={14}><Expander /><Check type="checkbox" defaultChecked />{name}</TreeRow>
              <TreeRow $in={28}>Type</TreeRow>
              {colors.map((c, i) => (
                <Symbol key={i} $in={40} $h={i === 3 ? h + 10 : h}>
                  {SYMBOLS[shape](c)}<span>{CLASSES[i]}</span>
                </Symbol>
              ))}
            </div>
          ))}
        </TreeList>
        <PaneScroll><span><Caret $color="#777" /></span></PaneScroll>
      </TreeScroll>
    </Contents>
  );
}

/* ---------- map ---------- */

const MapPane = styled.section`
  flex: 1;
  min-width: 0;
  display: flex;
  flex-direction: column;
  margin: 0 8px 0 6px;
  border: 1px solid #c6c6c6;
  background: #f8f8f8;
`;
const MapCanvas = styled.div`
  flex: 1;
  min-height: 0;
  display: flex;
  align-items: flex-end;
  background: #56573f;
  overflow: hidden;
  svg { width: 100%; height: 56px; }
`;
const MapStatus = styled.div`
  display: grid;
  grid-template-columns: 1fr auto 1fr;
  align-items: center;
  height: 24px;
  padding: 0 4px 2px;
  > span { padding-left: 14px; }
`;
const Cluster = styled.div`
  display: flex;
  align-items: center;
  gap: ${(p) => p.$gap}px;
  justify-content: ${(p) => (p.$end ? "flex-end" : "flex-start")};
  color: ${(p) => (p.$end ? "#999" : "#333")};
`;
const Rule = styled.i`
  width: 1px;
  height: 15px;
  background: #999;
`;
const ScaleBox = styled.span`
  display: flex;
  align-items: center;
  width: 100px;
  height: 22px;
  padding: 0 5px;
  border: 1px solid #999;
  margin-right: 2px;
  background: #fff;
  select { flex: 1; appearance: none; border: 0; background: none; padding: 0; }
`;
const ToggleIcon = styled.button`
  width: 20px;
  height: 20px;
  display: grid;
  place-items: center;
  background: ${(p) => (p.$on ? "#a3d3f3" : "none")};
`;

function Aerial() {
  return (
    <svg viewBox="0 0 1279 56" preserveAspectRatio="none">
      <defs>
        <filter id="town" x="0" y="0" width="100%" height="100%" colorInterpolationFilters="sRGB">
          <feTurbulence type="fractalNoise" baseFrequency=".34 .24" numOctaves="3" seed="4" />
          <feColorMatrix values="1 .2 0 0 -.26  .95 .2 0 0 -.22  .8 .2 0 0 -.25  0 0 0 0 1" />
        </filter>
        <filter id="hills" x="0" y="0" width="100%" height="100%" colorInterpolationFilters="sRGB">
          <feTurbulence type="fractalNoise" baseFrequency=".03 .05" numOctaves="5" seed="9" />
          <feColorMatrix values="1.200 0 0 0 -.14  1.100 0 0 0 -.15  .9 0 0 0 -.14  0 0 0 0 1" />
        </filter>
        <linearGradient id="fade">
          <stop offset="0" stopColor="#fff" />
          <stop offset=".75" stopColor="#fff" />
          <stop offset="1" stopColor="#000" />
        </linearGradient>
        <mask id="west"><rect width="430" height="56" fill="url(#fade)" /></mask>
      </defs>
      <rect width="1279" height="56" filter="url(#town)" />
      <g mask="url(#west)"><rect width="430" height="56" filter="url(#hills)" /></g>
      <path d="M58 18l22-2 24 8 2 32H64q-10-20-6-38z" fill="#2f3a24" opacity=".45" />
      <path d="M138 18l1 38M150 20l64 30M172 32v24" stroke="#a9a38b" strokeWidth="2.500" fill="none" opacity=".6" />
      <path d="M488 56q-6-8-4-16l8-14 10 4q0 14 18 26z" fill="#9c8560" opacity=".75" />
      <path d="M500 32l8 12 6 12h8l-10-18z" fill="#4d8a3c" opacity=".7" />
      <path d="M648 16h4v40h-4z" fill="#8a8670" opacity=".7" />
      <path d="M667 16h31q2 20-2 40h-14q-16-20-15-40z" fill="#103f17" />
      <path d="M716 56q0-18 8-30 20-8 38 2 8 12 2 28z" fill="#98805a" opacity=".85" />
      <path d="M727 30q8-4 12 6 18-2 22 6 2 12-10 12h-22q-10-6-4-12 6-4 2-12z" fill="#3d8373" />
      <path d="M906 42h26v8h-26zM905 46h9v8h-9zM945 40h10v4h-10zM1020 48h8v6h-8z" fill="#d4d6d4" />
      <path d="M1084 50q-4-14 6-16 10 2 8 10v6z" fill="#7d6246" />
      <path d="M1112 48q10-8 22 0v3h-22z" fill="#17251a" />
      <g transform="translate(1251 29)">{ICONS.chat}</g>
    </svg>
  );
}

function MapView() {
  return (
    <MapPane>
      <MapCanvas><Aerial /></MapCanvas>
      <MapStatus>
        <Cluster $gap={3}>
          <ScaleBox>
            <select aria-label="Map scale"><option>1:43,404</option></select>
            <Caret />
          </ScaleBox>
          <Rule />
          <ToggleIcon $on aria-label="Snapping"><Icon name="snap" /></ToggleIcon>
          <ToggleIcon aria-label="Constraints"><Icon name="snap2" /></ToggleIcon>
          <ToggleIcon aria-label="Grid"><Icon name="grid" size={14} /></ToggleIcon>
          <ToggleIcon aria-label="Inference"><Icon name="cross" /></ToggleIcon>
          <ToggleIcon aria-label="Rotate"><Icon name="north" /></ToggleIcon>
          <Rule />
        </Cluster>
        <span>105.1319001°W 39.6840393°N</span>
        <Cluster $gap={6} $end>
          <Rule />
          <Icon name="selZoom" />
          <span>Selected Features: 0</span>
          <Rule />
          <button aria-label="Pause drawing"><Icon name="pause" /></button>
          <Rule />
          <button aria-label="Refresh"><Icon name="refresh" /></button>
        </Cluster>
      </MapStatus>
    </MapPane>
  );
}

/* ---------- model explorer ---------- */

const Explorer = styled.aside`
  width: 306px;
  display: flex;
  flex-direction: column;
  font-family: "Liberation Sans", sans-serif;
`;
const ExplorerBody = styled.div`
  flex: 1;
  min-height: 0;
  display: flex;
  flex-direction: column;
  background: #f1f1f1;
  border: 1px solid #c6c6c6;
  border-top: 4px solid #cacaca;
  padding: 0 4px 3px 2px;
`;
const PaneTools = styled.div`
  display: flex;
  justify-content: flex-end;
  align-items: center;
  gap: 7px;
  height: 31px;
  padding-bottom: 12px;
  background: #f8f8f8;
`;
const ElementRow = styled.div`
  display: flex;
  justify-content: flex-end;
  align-items: center;
  gap: 5px;
  height: 26px;
`;
const ElementBox = styled.span`
  flex: 1;
  display: flex;
  align-items: center;
  height: 22px;
  padding-right: 5px;
  background: #fff;
  select { flex: 1; appearance: none; border: 0; background: none; }
`;
const OutputRow = styled.div`
  display: flex;
  justify-content: flex-end;
  align-items: center;
  height: 22px;
  gap: 6px;
  padding-right: 5px;
  border-bottom: 1px solid #ddd;
  color: #111;
  select { width: 100px; height: 20px; border: 1px solid #999; background: #e8e8e8; }
  label { display: flex; align-items: center; gap: 4px; }
`;
const MoreRow = styled.div`
  display: flex;
  justify-content: flex-end;
  align-items: center;
  height: 24px;
  border-bottom: 1px solid #ccc;
`;
const ToolStrip = styled.div`
  display: flex;
  align-items: center;
  gap: ${(p) => p.$gap || 6}px;
  height: 21px;
  padding-left: ${(p) => p.$in}px;
  background: linear-gradient(#fff, #ececec);
  overflow: hidden;
`;
const Overflow = styled.button`
  width: 11px;
  align-self: stretch;
  margin-left: auto;
  padding-bottom: 3px;
  display: grid;
  place-items: end center;
  border-radius: 0 0 4px 0;
  background: linear-gradient(#eee, #b5b5b5);
`;
const FieldSelect = styled.span`
  display: flex;
  align-items: center;
  height: 23px;
  padding-right: 2px;
  border: 1px solid #666;
  background: #fff;
  select { flex: 1; appearance: none; border: 0; background: none; }
`;
const FieldArea = styled.div`
  flex: 1;
  min-height: 0;
  display: flex;
  margin-right: 2px;
  border: 1px solid #444;
  border-width: 1px 0 0 2px;
  background: #fff;
  overflow: hidden;
`;
const FieldTable = styled.table`
  flex: 1;
  height: 0;
  border-collapse: collapse;
  td {
    height: 15px;
    padding: 0 0 0 124px;
    line-height: 14px;
    border-bottom: 1px solid #c8c8c8;
    white-space: nowrap;
    color: #111;
  }
  tr.line td { border-bottom: 2px solid #000; }
  tr.head td { background: #ececec; }
  tr.link td { color: #1a1ab8; padding-left: 110px; }
`;
const FieldScroll = styled.div`
  width: 16px;
  background: #cbcbcb;
  display: flex;
  flex-direction: column;
  justify-content: space-between;
  span { height: 18px; background: #f1f1f1; display: grid; place-items: center; }
  span:first-child { height: 24px; place-items: end center; padding-bottom: 3px; }
`;
const InnerTabs = styled.div`
  display: flex;
  height: 27px;
  border-top: 1px solid #c6c6c6;
  button { height: 23px; padding: 0 4px; border-right: 1px solid #c6c6c6; color: #111; }
  button:first-child { height: 26px; padding: 2px 6px 0; background: #fff; }
`;
const DockTabs = styled.div`
  display: flex;
  height: 20px;
  font-family: "Open Sans", sans-serif;
  button { padding: 0 6px; color: #333; }
  button:first-child { background: #f8f8f8; border: 1px solid #c6c6c6; border-top: 0; color: #1269bd; }
`;

const FIELD_ROWS = 36;
const FIELD_VALUES = { 3: "3160429.309770", 4: "1682077.326100", 6: "Pressure Reducing Valve", 32: "Pressure Reducing Valve" };
const FIELD_HEADS = [2, 5, 16, 22];

function ModelExplorer() {
  return (
    <Explorer>
      <ExplorerBody>
        <PaneTools>
          <Caret $big />
          <button aria-label="Auto hide"><Icon name="pin" size={12} /></button>
          <button aria-label="Close pane"><Glyph d="M2 2l8 8M10 2l-8 8" color="#444" /></button>
        </PaneTools>
        <ElementRow>
          <ElementBox><select aria-label="Element"><option> </option></select><Caret $color="#111" /></ElementBox>
          <button aria-label="Edit element"><Icon name="dbSmall" /></button>
        </ElementRow>
        <OutputRow>
          <select aria-label="Output source" />
          <label><Check type="checkbox" defaultChecked />Refresh Output</label>
        </OutputRow>
        <MoreRow><button aria-label="More"><Glyph d="M4 2l4 4-4 4" w={2} color="#333" /></button></MoreRow>
        <ToolStrip $in={187} $gap={4}>
          <Icon name="eraser" size={18} /><Rule /><Icon name="reportS" size={18} /><Icon name="bars" size={17} /><Rule />
          <Overflow aria-label="Toolbar options"><Glyph size={9} d="M2 3h8M3 6.500h6L6 10z" w={2} /></Overflow>
        </ToolStrip>
        <ToolStrip $in={180}>
          <Icon name="slidersS" size={14} /><Icon name="slidersOff" size={18} /><Icon name="valveSet" size={18} /><Icon name="cup" size={14} /><Rule />
          <Overflow aria-label="Toolbar options"><Glyph size={9} d="M2 3h8M3 6.500h6L6 10z" w={2} /></Overflow>
        </ToolStrip>
        <ToolStrip $in={190} $gap={3}>
          <Icon name="valveTable" size={18} /><Rule /><Icon name="hydrantOff" size={17} />
        </ToolStrip>
        <FieldSelect>
          <select aria-label="Field set"><option> </option></select>
          <Glyph d="M2 4l4 4 4-4" color="#444" />
        </FieldSelect>
        <FieldArea>
          <FieldTable>
            <tbody>
              {Array.from({ length: FIELD_ROWS }, (_, i) => (
                <tr key={i} className={i < 2 ? "line" : i === 32 ? "link" : FIELD_HEADS.includes(i) ? "head" : ""}>
                  <td>{FIELD_VALUES[i]}</td>
                </tr>
              ))}
            </tbody>
          </FieldTable>
          <FieldScroll>
            <span><Glyph d="M2 8l4-4 4 4" w={2} color="#444" /></span>
            <span><Glyph d="M2 4l4 4 4-4" w={2} color="#444" /></span>
          </FieldScroll>
        </FieldArea>
        <InnerTabs>
          <button>Attribute</button><button>Operation</button><button>Command Center</button>
        </InnerTabs>
      </ExplorerBody>
      <DockTabs>
        <button>Model Explorer</button><button>Geoprocessing</button><button>Job Status</button>
      </DockTabs>
    </Explorer>
  );
}

const SideTabs = styled.div`
  width: 30px;
  display: flex;
  flex-direction: column;
  align-items: flex-end;
  gap: 10px;
  button {
    writing-mode: vertical-rl;
    width: 24px;
    border-right: 6px solid #cacaca;
    padding-right: 1px;
    line-height: 16px;
    font-size: 12px;
  }
`;
const Footer = styled.footer`
  height: 30px;
  padding: 7px 0 0 5px;
  button { height: 22px; line-height: 17px; border-bottom: 5px solid #cacaca; }
`;

/* ---------- gap analysis window ---------- */

const Dialog = styled.section`
  position: absolute;
  inset: 134px 149px 93px 60px;
  display: flex;
  flex-direction: column;
  background: #fff;
  border: 1px solid #444;
  box-shadow: 0 6px 22px rgba(0, 0, 0, 0.5);
  padding: 0 1px 3px 2px;
  color: #111;
`;
const DialogTitle = styled.div`
  display: flex;
  align-items: center;
  height: 30px;
  gap: 6px;
  padding: 0 0 0 6px;
  h2 { flex: 1; margin: 0; font-size: 11px; font-weight: 400; }
`;
const Toolbar = styled.div`
  display: flex;
  align-items: center;
  height: 29px;
  label { display: flex; align-items: center; gap: 7px; margin-right: 8px; white-space: nowrap; }
  label + label { margin-right: 4px; }
`;
const Grip = styled.i`
  width: 3px;
  height: 14px;
  margin: 0 6px 0 0;
  background: repeating-linear-gradient(#bbb 0 1px, #fff 1px 3px);
`;
const Combo = styled.span`
  display: flex;
  width: ${(p) => p.$w}px;
  height: 22px;
  padding: 1px;
  border: 1px solid #999;
  select, input { flex: 1; min-width: 0; appearance: none; border: 0; background: none; padding: 0 0 0 4px; }
  i { width: 16px; border: 1px solid #999; background: #f0f0f0; display: grid; place-items: center; }
`;
const Tool = styled.button`
  width: 23px;
  height: 28px;
  border: solid #fff;
  border-width: 0 0 0 1px;
  display: grid;
  place-items: center;
  background: ${(p) => (p.$on ? "#94c1e3" : "none")};
`;
const Docks = styled.div`
  flex: 1;
  min-height: 0;
  display: grid;
  grid-template-columns: 1fr 1fr;
  gap: 4px;
  padding: 3px 0 0;
`;
const Dock = styled.div`
  display: flex;
  flex-direction: column;
  min-width: 0;
  gap: 5px;
`;
const Panel = styled.div`
  display: flex;
  flex-direction: column;
  height: ${(p) => (p.$h ? p.$h + "px" : "auto")};
  flex: ${(p) => (p.$h ? "none" : 1)};
  min-height: 0;
`;
const PanelHead = styled.div`
  display: flex;
  justify-content: space-between;
  align-items: center;
  height: 28px;
  padding-right: 5px;
  border-bottom: 4px solid ${(p) => (p.$on ? "#0070c8" : "#ababab")};
  span {
    height: 24px;
    padding: 0 7px 0 6px;
    line-height: 26px;
    color: #fff;
    background: ${(p) => (p.$on ? "#0070c8" : "#ababab")};
  }
`;
const PanelBody = styled.div`
  flex: 1;
  min-height: 0;
  display: flex;
  flex-direction: column;
  border: 1px solid #999;
  border-top: 0;
  padding: ${(p) => p.$pad || 0}px;
`;

const GridBox = styled.div`
  flex: 1;
  min-height: 0;
  display: flex;
  border: 1px solid #c6c6c6;
  overflow: hidden;
`;
const GridView = styled.div`
  flex: 1;
  min-width: 0;
  overflow: hidden;
`;
const Table = styled.table`
  width: 100%;
  table-layout: fixed;
  border-collapse: separate;
  border-spacing: 0;
  th, td {
    text-align: left;
    white-space: nowrap;
    overflow: hidden;
    padding: 0 0 0 5px;
  }
  th {
    height: 32px;
    padding-left: 3px;
    border-bottom: 1px solid #c6c6c6;
    border-right: 3px solid #fff;
    font-weight: 600;
    color: #555;
  }
  th:first-child, td:first-child { padding: 0; border-right: 1px solid #ccc; background: #f4f4f4; }
  td:nth-child(2) { padding-left: 7px; }
  th:nth-child(2) { padding-left: 6px; }
  th:last-child { border-right: 0; }
`;
const Row = styled.tr`
  height: 32px;
  background: ${(p) => (p.$selected ? "#06b0d3" : p.$alt ? "#f4f4f4" : "#fff")};
  color: ${(p) => (p.$selected ? "#fff" : "#111")};
  td:first-child { border-bottom: 1px solid ${(p) => (p.$selected ? "#7cc8ea" : "#ddd")}; }
`;
const Rating = styled.span`
  display: flex;
  align-items: center;
  gap: 5px;
  &::before { content: ""; width: 10px; height: 10px; background: ${(p) => (p.$good ? "#008000" : "#f00")}; }
`;
const GridScroll = styled.div`
  width: 12px;
  padding-top: 34px;
  display: flex;
  flex-direction: column;
  align-items: center;
  gap: 3px;
  background: #f2f2f2;
  div { flex: 1; width: 8px; background: #ddd; }
  div::before { content: ""; display: block; height: 146px; background: #79bbe8; }
`;
const ScrollArrow = styled.i`
  border: 4px solid transparent;
  border-${(p) => (p.$up ? "bottom" : "top")}: 6px solid #888;
  border-${(p) => (p.$up ? "top" : "bottom")}: 0;
  margin-bottom: ${(p) => (p.$up ? 0 : 3)}px;
`;

const COLUMNS = ["#", "Type", "Element", "Series", "Min", "Max", "Avg", "Std Dev", "RMSD", "Min (%)", "Max (%)", "Avg (%)", "Std Dev (%)", "NRMSD (%)", "RSR (%)", "Category"];
const ROWS = [
  "1 Junction J1 J1 0.00 11.37 2.81 2.05 3.48 0.00 9.27 2.22 73.09 18.15 0.00 Good",
  "2 Tank T5 T5 112.48 129.00 122.09 4.67 122.17 0.00 0.00 ∞ 3.83 ∞ ∞ Poor",
  "3 Junction J1 J1 0.00 11.37 2.81 2.05 3.48 0.00 9.27 2.22 73.09 18.15 0.00 Good",
  "4 Junction J1 J1 0.00 2.55 0.07 0.20 0.21 -482.21 119.92 -236.72 283.41 3.55 0.00 Good",
  "5 Junction J1 J1 0.00 18.67 5.64 3.54 6.66 0.00 14.23 4.17 62.82 22.39 0.01 Good",
  "6 Junction J4 J4 0.00 7.49 2.05 1.53 2.55 0.00 6.25 1.62 74.52 17.62 0.01 Good",
  "7 Junction J9 J9 0.00 8.46 3.09 2.18 3.78 0.00 8.36 3.28 70.54 24.49 0.00 Good",
  "8 Pump P- P- 0.00 1.00 0.52 0.41 0.66 0.00 100.00 100.00 78.81 66.03 0.05 Poor",
  "9 Pump P- P- 0.00 1.00 0.14 0.27 0.30 0.00 100.00 100.00 190.46 30.06 0.06 Poor",
].map((line) => line.split(" "));

function SummaryGrid() {
  const [selected, setSelected] = useState([3, 5]);
  const toggle = (n) => setSelected(selected.includes(n) ? selected.filter((s) => s !== n) : [...selected, n]);

  return (
    <GridBox>
      <GridView>
        <Table>
          <colgroup>
            <col width="6" /><col width="33" /><col width="56" /><col width="20" /><col width="20" />
            {COLUMNS.slice(4, 15).map((c) => <col key={c} />)}
            <col width="56" />
          </colgroup>
          <thead>
            <tr><th />{COLUMNS.map((c) => <th key={c}>{c}</th>)}</tr>
          </thead>
          <tbody>
            {ROWS.map((row, i) => (
              <Row key={i} $alt={i % 2 === 1} $selected={selected.includes(i + 1)} onClick={() => toggle(i + 1)}>
                <td />
                {row.map((v, j) => <td key={j}>{j === 15 ? <Rating $good={v === "Good"}>{v}</Rating> : v}</td>)}
              </Row>
            ))}
            <Row $alt><td /><td colSpan={16} /></Row>
          </tbody>
        </Table>
      </GridView>
      <GridScroll><ScrollArrow $up /><div /><ScrollArrow /></GridScroll>
    </GridBox>
  );
}

/* ---------- charts ---------- */

const Legend = styled.div`
  align-self: flex-start;
  display: flex;
  align-items: center;
  gap: 13px;
  height: 38px;
  padding: 0 15px 0 14px;
  margin: 17px 0 0 17px;
  border: 1px solid #ccc;
  color: #333;
`;
const Key = styled.span`
  display: flex;
  align-items: center;
  gap: 4px;
  &::before {
    content: "";
    width: ${(p) => (p.$line ? 13 : 12)}px;
    height: ${(p) => (p.$line ? 2 : 12)}px;
    background: ${(p) => p.$color};
  }
`;
const Plot = styled.svg`
  width: 100%;
  height: auto;
  font-size: 11px;
  fill: #333;
`;
const ChartCell = styled.div`
  display: flex;
  flex-direction: column;
  flex: ${(p) => (p.$grow ? 1 : "none")};
  border-bottom: ${(p) => (p.$grow ? 0 : 1)}px solid #c8c8c8;
`;

const Keys = ({ line }) => (
  <Legend>
    <Key $line={line} $color={BLUE}>J1394_Pressure</Key>
    <Key $line={line} $color={RED}>J1406_Pressure</Key>
  </Legend>
);

function BarChart({ data, step, count, unit, top, plotTop, height }) {
  const left = 45;
  const width = 785;
  const base = top + step * count * unit;
  const slot = width / data.length;
  const bar = slot * 0.31;
  const y = (v) => base - v * unit;
  const minor = Array.from({ length: data.length * 5 }, (_, i) => i);

  return (
    <Plot viewBox={`0 0 848 ${height}`}>
      {Array.from({ length: count }, (_, i) => i).filter((i) => i % 2 === 1).map((i) => (
        <rect key={i} x={left} y={y((i + 1) * step)} width={width} height={step * unit} fill="#f7f7f7" />
      ))}
      <path d={`M${left + width} ${base}V${plotTop}`} stroke="#e2e2e2" />
      <path d={`M${left} ${base}V${plotTop}H${left + width}`} fill="none" stroke="#ccc" />
      {Array.from({ length: count + 1 }, (_, i) => (
        <g key={i}>
          <path d={`M${left - 5} ${y(i * step)}H${left + width}`} stroke="#c8c8c8" />
          <text x={left - 10} y={y(i * step) + 4} textAnchor="end">{i * step}</text>
          {i < count && [1, 2, 3, 4].map((k) => (
            <path key={k} d={`M${left - 2} ${y((i + k / 5) * step)}h2`} stroke="#ccc" />
          ))}
        </g>
      ))}
      {minor.map((i) => <path key={i} d={`M${left + slot / 10 + (i * slot) / 5 } ${base}v2`} stroke="#ccc" />)}
      {data.map(([label, a, b], i) => {
        const cx = left + slot * (i + 0.5);
        return (
          <g key={label}>
            <path d={`M${cx} ${base}v5`} stroke="#bbb" />
            {a > 0 && <rect x={cx - bar - 0.5} y={y(a)} width={bar - 0.5} height={a * unit} fill={BLUE} stroke="#14263c" />}
            {b > 0 && <rect x={cx + 0.5} y={y(b)} width={bar - 0.5} height={b * unit} fill={RED} stroke="#3f1011" />}
            <text x={cx} y={base + (i % 2 ? 19 : 37)} textAnchor="middle">{label}</text>
          </g>
        );
      })}
    </Plot>
  );
}

const PSI = [
  ["Min (psi)", 0, 0], ["Max (psi)", 11.37, 18.67], ["Avg (psi)", 2.81, 5.64], ["Std Dev", 2.05, 3.54], ["RMSD", 3.48, 6.66],
];
const PERCENT = [
  ["Min (%)", 0, 0], ["Max (%)", 9.27, 14.23], ["Avg (%)", 2.22, 4.17], ["Std Dev (%)", 73.09, 62.82], ["NRMSD (%)", 18.15, 22.39], ["RSR (%)", 0, 0],
];

// residual extremes: [offset along the month, psi]
const PEAKS = [
  [10, 18.4], [22, 12.6], [40, 14], [50, 12.1], [60, 12.2], [72, 12.4], [91, 11.7], [100, 11.4], [118, 11.8], [129, 11.7],
  [148, 11.5], [160, 16.1], [172, 8.7], [191, 10.4], [202, 13], [210, 15.4], [224, 14], [239, 12.8], [251, 12.9], [262, 13.1],
  [274, 10.2], [291, 11], [302, 14.9], [313, 16.4], [324, 11.7], [337, 10.8], [349, 13.3], [366, 12.2], [377, 10], [394, 12.2],
  [411, 11.6], [423, 15.9], [436, 13.1], [449, 13.8], [467, 13.6], [475, 11.6], [486, 16.7], [499, 10.9], [515, 12.1], [526, 11.2],
  [538, 16.4], [548, 10.3], [566, 11.8], [579, 10.3], [594, 13.1], [601, 12.6], [611, 16.5], [624, 12.9], [640, 10.2], [651, 11.3],
  [661, 14.9], [673, 10.8], [689, 13.1], [704, 13.3], [714, 18], [725, 8.8], [736, 17], [748, 5.8],
];
const TROUGHS = [
  [6, -16.2], [17, -10.9], [31, -10.5], [46, -13], [57, -9.8], [67, -13.6], [81, -11.9], [95, -9.8], [108, -9.4], [127, -12.6],
  [138, -11.7], [156, -17.1], [167, -14], [180, -11.2], [194, -11.9], [207, -17.9], [218, -12.2], [231, -10.7], [245, -12.1], [258, -17.3],
  [268, -14.3], [281, -11.5], [296, -12.6], [307, -16.6], [318, -11.3], [330, -9.5], [342, -10.6], [357, -10.6], [371, -12.1], [383, -11.1],
  [403, -10.2], [417, -14], [432, -18.6], [441, -11.2], [456, -12.1], [468, -12.2], [481, -15.6], [493, -11.9], [507, -11.2], [521, -9.5],
  [533, -17.5], [543, -9], [557, -10.4], [574, -11.2], [584, -10.5], [596, -13.1], [607, -16.4], [618, -13.8], [631, -11.9], [642, -8.6],
  [655, -13.8], [668, -14.7], [681, -11.7], [696, -11.3], [706, -15.2], [719, -12.2], [731, -14.3], [742, -11.9], [750, -10.8],
];

function random(seed) {
  let s = seed;
  return () => {
    s = (s * 16807) % 2147483647;
    return s / 2147483647;
  };
}

function buildSeries(points, seed, jitter) {
  const next = random(seed);
  const out = [];
  points.forEach(([x, v], i) => {
    const [x0, v0] = i ? points[i - 1] : [0, 4];
    const n = Math.max(3, Math.round((x - x0) * 1.2));
    const low = Math.min(v0, v);
    const high = Math.max(v0, v);
    for (let k = 1; k < n; k++) {
      const t = k / n;
      const swing = (k % 2 ? 1 : -1) * jitter * (0.3 + 0.7 * next());
      const value = v0 + (v - v0) * t + swing;
      out.push([x0 + (x - x0) * t, Math.min(high * 0.75, Math.max(low * 0.75, value))]);
    }
    out.push([x, v]);
  });
  return out;
}

const redSeries = buildSeries([...PEAKS, ...TROUGHS].sort((a, b) => a[0] - b[0]), 11, 10);
const blueNext = random(37);
const blueSeries = buildSeries(
  Array.from({ length: 151 }, (_, i) => [i * 5, i % 2 ? -4 - blueNext() * 6 : 4 + blueNext() * 7]), 5, 10
);
const toPath = (series) => "M" + series.map(([x, v]) => `${(80 + x).toFixed(1)} ${(120.5 - v * 4.3).toFixed(1)}`).join("L");

function GapGraph() {
  return (
    <Plot viewBox="0 0 848 270">
      <path d="M80 25.500h750v9H80zM80 120.500h750v86H80z" fill="#f7f7f7" />
      <path d="M80.500 216.500v-191h749.500v191z" fill="none" stroke="#ccc" />
      {[20, 0, -20].map((v) => (
        <g key={v}>
          <path d={`M75 ${120.5 - v * 4.3}H830`} stroke="#c8c8c8" />
          <text x="70" y={124 - v * 4.3} textAnchor="end">{v}</text>
        </g>
      ))}
      {[-16, -12, -8, -4, 4, 8, 12, 16].map((v) => <path key={v} d={`M77 ${120.5 - v * 4.3}h3`} stroke="#ccc" />)}
      {Array.from({ length: 21 }, (_, i) => <path key={i} d={`M${100.5 + i * 35} 217v2`} stroke="#ccc" />)}
      <path d={toPath(blueSeries)} fill="none" stroke={BLUE} strokeWidth="2" />
      <path d={toPath(redSeries)} fill="none" stroke={RED} strokeWidth="1.900" />
      {["06", "13", "20", "27"].map((d, i) => (
        <g key={d}>
          <path d={`M${205.5 + i * 175} 217v5`} stroke="#bbb" />
          <text x={205 + i * 175} y="234" textAnchor="middle">00:00 Jun {d}</text>
        </g>
      ))}
      <g fontSize="14" fontStyle="italic" fontWeight="600" fill="#111" textAnchor="middle">
        <text x="455" y="258">Time</text>
        <text transform="translate(36 121) rotate(-90)">Pressure (psi)</text>
      </g>
    </Plot>
  );
}

const PanelTop = ({ title, on }) => (
  <PanelHead $on={on}>
    <span>{title}</span>
    <button aria-label={`${title} menu`}><Caret $big $color="#444" /></button>
  </PanelHead>
);

const TOOLS = ["tList", "tTable", "tGraph", "tGraph2", "tGraph3", "tBars", "gear", "reload"];

function GapAnalysis() {
  const [category, setCategory] = useState("All");
  const [start, setStart] = useState("6/1/2021");

  return (
    <Dialog aria-label="Gap Analysis">
      <DialogTitle>
        <Icon name="gap" size={15} />
        <h2>Gap Analysis</h2>
        <WindowButtons>
          <button aria-label="Minimize"><Glyph d="M1 6.500h10" /></button>
          <button aria-label="Maximize"><Glyph d="M1.500 1.500h9v9h-9z" w={1.4} /></button>
          <button aria-label="Close"><Glyph d="M1 1l10 10M11 1L1 11" /></button>
        </WindowButtons>
      </DialogTitle>
      <Toolbar>
        <Grip />
        <label>
          Category
          <Combo $w={80}>
            <select value={category} onChange={(e) => setCategory(e.target.value)}>
              <option>All</option><option>Good</option><option>Poor</option>
            </select>
            <i><Glyph d="M2 4l4 4 4-4" color="#555" /></i>
          </Combo>
        </label>
        <label>
          Start Date
          <Combo $w={100}>
            <input value={start} onChange={(e) => setStart(e.target.value)} />
            <i><Glyph d="M2 4l4 4 4-4" color="#555" /></i>
          </Combo>
        </label>
        {TOOLS.map((t) => (
          <Tool key={t} $on={t === "tGraph2" || t === "tBars"} aria-label={t}><Icon name={t} size={t === "gear" || t === "reload" ? 14 : 16} /></Tool>
        ))}
        <span>&nbsp;Current Timezone: Local Time</span>
      </Toolbar>
      <Docks>
        <Dock>
          <Panel $h={370}>
            <PanelTop title="Gap Summary" on />
            <PanelBody $pad={5}><SummaryGrid /></PanelBody>
          </Panel>
          <Panel>
            <PanelTop title="Gap Graph" />
            <PanelBody>
              <Keys line />
              <GapGraph />
            </PanelBody>
          </Panel>
        </Dock>
        <Dock>
          <Panel>
            <PanelTop title="Gap Statistics" />
            <PanelBody>
              <ChartCell>
                <Keys />
                <BarChart data={PSI} step={10} count={2} unit={10.95} top={25.5} plotTop={19.5} height={302} />
              </ChartCell>
              <ChartCell $grow>
                <BarChart data={PERCENT} step={20} count={4} unit={3.41} top={26.5} plotTop={26.5} height={350} />
              </ChartCell>
            </PanelBody>
          </Panel>
        </Dock>
      </Docks>
    </Dialog>
  );
}

export default function App() {
  return (
    <Page>
      <GlobalStyle />
      <TitleBar />
      <Ribbon />
      <Workspace>
        <ContentsPane />
        <MapView />
        <ModelExplorer />
        <SideTabs><button>Pop-up</button><button>Attributes</button></SideTabs>
      </Workspace>
      <Footer><button>Message Board</button></Footer>
      <GapAnalysis />
    </Page>
  );
}
